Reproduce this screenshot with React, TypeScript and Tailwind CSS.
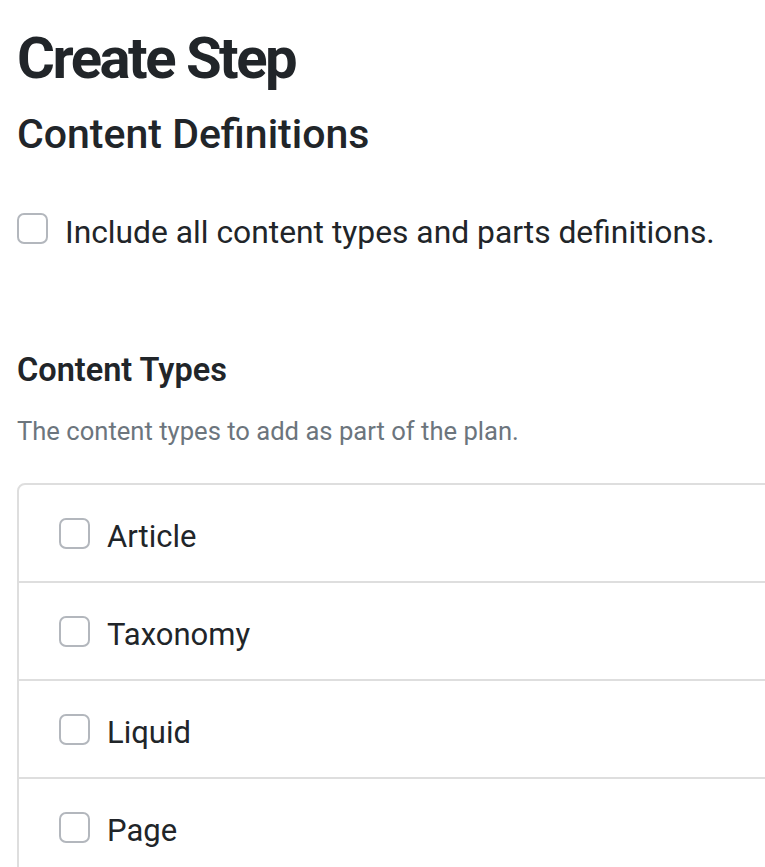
const contentTypes = ['Article', 'Taxonomy', 'Liquid', 'Page']

const Checkbox = ({ className = '' }: { className?: string }) => (
  <span className={`block w-[31px] h-[31px] shrink-0 rounded-[7px] border-2 border-[#b3b7bd] bg-white ${className}`} />
)

const App = () => {
  return (
    <div className="w-[765px] h-[867px] overflow-hidden bg-white text-[#212529] font-['Roboto',sans-serif]">
      <div className="pl-[17px]">
        <h1 className="pt-[23px] text-[58px] leading-[70px] font-bold tracking-[-2.5px] whitespace-nowrap">Create Step</h1>
        <h2 className="mt-[17px] text-[41px] leading-[48px] font-medium whitespace-nowrap">Content Definitions</h2>

        <label className="mt-[50px] flex items-start gap-[17px] whitespace-nowrap">
          <Checkbox className="mt-[5px]" />
          <span className="text-[31.8px] leading-[48px]">Include all content types and parts definitions.</span>
        </label>

        <h3 className="mt-[94px] text-[32.5px] leading-[40px] font-semibold whitespace-nowrap">Content Types</h3>
        <p className="mt-[23px] text-[25.6px] leading-[36px] text-[#6c757d] whitespace-nowrap">
          The content types to add as part of the plan.
        </p>

        <ul className="mt-[34px] w-[800px] border-2 border-[#dedede] rounded-[8px]">
          {contentTypes.map((name, i) => (
            <li
              key={name}
              className={`flex items-center gap-[17px] pl-[40px] ${i > 0 ? 'border-t-2 border-[#dedede] h-[98px]' : 'h-[96px]'}`}
            >
              <Checkbox />
              <span className="pt-[7px] text-[31px] leading-[48px] whitespace-nowrap">{name}</span>
            </li>
          ))}
        </ul>
      </div>
    </div>
  )
}

export default App
